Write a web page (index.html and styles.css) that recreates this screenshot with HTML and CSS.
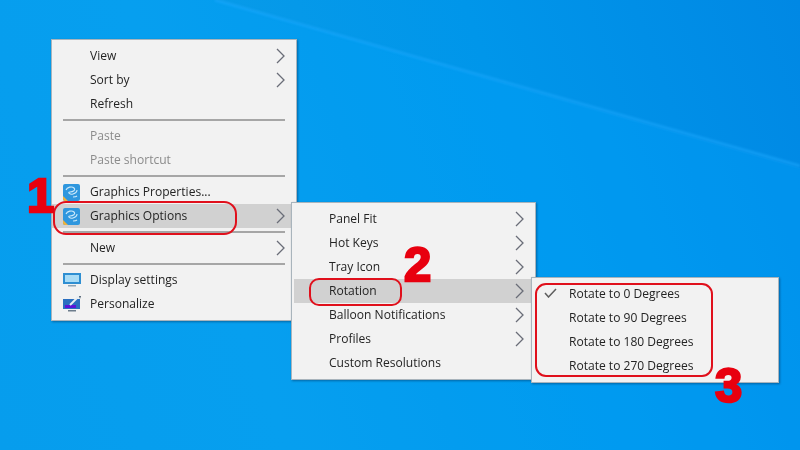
FILE: index.html
```html
<!DOCTYPE html>
<html lang="en">
<head>
  <meta charset="UTF-8" />
  <title>Rotate screen with Graphics Options</title>
  <link rel="stylesheet" href="styles.css">
</head>
<body>

<div class="desktop">
  <svg class="beam" width="800" height="450" viewBox="0 0 800 450">
    <polygon class="beam-glow" points="215,0 800,168 800,450 0,450 0,0" />
    <line class="beam-line" x1="215" y1="0" x2="800" y2="166" />
  </svg>

  <!-- desktop context menu -->
  <div class="menu menu-main">
    <div class="item"><span class="slot"></span><span class="label">View</span><svg class="chev" width="9" height="16" viewBox="0 0 9 16"><path d="M1 1l7 7-7 7" /></svg></div>
    <div class="item"><span class="slot"></span><span class="label">Sort by</span><svg class="chev" width="9" height="16" viewBox="0 0 9 16"><path d="M1 1l7 7-7 7" /></svg></div>
    <div class="item"><span class="slot"></span><span class="label">Refresh</span></div>
    <div class="sep"></div>
    <div class="item off"><span class="slot"></span><span class="label">Paste</span></div>
    <div class="item off"><span class="slot"></span><span class="label">Paste shortcut</span></div>
    <div class="sep"></div>
    <div class="item">
      <span class="slot">
        <svg class="ico" width="17" height="17" viewBox="0 0 17 17"><rect width="17" height="17" rx="2" fill="#2f97de" /><path d="M0 12l5 5H2a2 2 0 0 1-2-2z" fill="#efb23a" /><path d="M3 6c1-3 6-4 8-2s-1 4-4 4 0 3 3 2 4-2 4-4M10 13c1 0 3 0 4-1" fill="none" stroke="#cdeafa" stroke-width="1.1" /></svg>
      </span>
      <span class="label">Graphics Properties...</span>
    </div>
    <div class="item on">
      <span class="slot">
        <svg class="ico" width="17" height="17" viewBox="0 0 17 17"><rect width="17" height="17" rx="2" fill="#2f97de" /><path d="M0 12l5 5H2a2 2 0 0 1-2-2z" fill="#efb23a" /><path d="M3 6c1-3 6-4 8-2s-1 4-4 4 0 3 3 2 4-2 4-4M10 13c1 0 3 0 4-1" fill="none" stroke="#cdeafa" stroke-width="1.1" /></svg>
      </span>
      <span class="label">Graphics Options</span>
      <svg class="chev" width="9" height="16" viewBox="0 0 9 16"><path d="M1 1l7 7-7 7" /></svg>
    </div>
    <div class="sep"></div>
    <div class="item"><span class="slot"></span><span class="label">New</span><svg class="chev" width="9" height="16" viewBox="0 0 9 16"><path d="M1 1l7 7-7 7" /></svg></div>
    <div class="sep"></div>
    <div class="item">
      <span class="slot">
        <svg class="ico" width="18" height="16" viewBox="0 0 18 16"><rect x="0" y="1" width="18" height="11" fill="#2f8fd2" /><rect x="2" y="3" width="14" height="7" fill="#a9dcf6" /><rect x="5" y="13" width="8" height="1.5" fill="#8fa4b4" /></svg>
      </span>
      <span class="label">Display settings</span>
    </div>
    <div class="item">
      <span class="slot">
        <svg class="ico" width="18" height="16" viewBox="0 0 18 16"><rect x="0" y="3" width="17" height="10" fill="#2a6fc0" /><rect x="2" y="9" width="11" height="3" fill="#5a14d8" /><path d="M7 9l9-9" stroke="#e6eef4" stroke-width="2" /><path d="M16 0l2 0-1 3" fill="#46586a" /><rect x="5" y="14" width="8" height="1.5" fill="#6d7d8c" /></svg>
      </span>
      <span class="label">Personalize</span>
    </div>
  </div>

  <!-- Graphics Options submenu -->
  <div class="menu menu-sub">
    <div class="item"><span class="slot"></span><span class="label">Panel Fit</span><svg class="chev" width="9" height="16" viewBox="0 0 9 16"><path d="M1 1l7 7-7 7" /></svg></div>
    <div class="item"><span class="slot"></span><span class="label">Hot Keys</span><svg class="chev" width="9" height="16" viewBox="0 0 9 16"><path d="M1 1l7 7-7 7" /></svg></div>
    <div class="item"><span class="slot"></span><span class="label">Tray Icon</span><svg class="chev" width="9" height="16" viewBox="0 0 9 16"><path d="M1 1l7 7-7 7" /></svg></div>
    <div class="item on"><span class="slot"></span><span class="label">Rotation</span><svg class="chev" width="9" height="16" viewBox="0 0 9 16"><path d="M1 1l7 7-7 7" /></svg></div>
    <div class="item"><span class="slot"></span><span class="label">Balloon Notifications</span><svg class="chev" width="9" height="16" viewBox="0 0 9 16"><path d="M1 1l7 7-7 7" /></svg></div>
    <div class="item"><span class="slot"></span><span class="label">Profiles</span><svg class="chev" width="9" height="16" viewBox="0 0 9 16"><path d="M1 1l7 7-7 7" /></svg></div>
    <div class="item"><span class="slot"></span><span class="label">Custom Resolutions</span></div>
  </div>

  <!-- Rotation submenu -->
  <div class="menu menu-rot">
    <div class="item">
      <span class="slot"><svg class="check" width="13" height="10" viewBox="0 0 13 10"><path d="M1 5l3.5 4L12 1" /></svg></span>
      <span class="label">Rotate to 0 Degrees</span>
    </div>
    <div class="item"><span class="slot"></span><span class="label">Rotate to 90 Degrees</span></div>
    <div class="item"><span class="slot"></span><span class="label">Rotate to 180 Degrees</span></div>
    <div class="item"><span class="slot"></span><span class="label">Rotate to 270 Degrees</span></div>
  </div>

  <!-- red annotations -->
  <div class="ring ring-1"></div>
  <div class="ring ring-2"></div>
  <div class="ring ring-3"></div>
  <span class="step step-1">1</span>
  <span class="step step-2">2</span>
  <span class="step step-3">3</span>
</div>

</body>
</html>
```

FILE: styles.css
```css
* {
  margin: 0;
  padding: 0;
  box-sizing: border-box;
}

body {
  width: 800px;
  height: 450px;
  overflow: hidden;
  font-family: 'Open Sans', 'Liberation Sans', sans-serif;
}

.desktop {
  position: relative;
  width: 800px;
  height: 450px;
  overflow: hidden;
  background: linear-gradient(250deg, #0088e4 0%, #0096ea 35%, #0a9ce8 70%, #0a9ae6 100%);
}

.beam {
  position: absolute;
  left: 0;
  top: 0;
}

.beam-glow {
  fill: rgba(0, 165, 255, 0.3);
}

.beam-line {
  stroke: rgba(30, 170, 255, 0.55);
  stroke-width: 3;
  filter: blur(1px);
}

.menu {
  position: absolute;
  background: #f2f2f2;
  border: 1px solid #a9b4bc;
  padding: 4px 0;
  box-shadow: 1px 1px 2px rgba(0, 40, 80, 0.45);
  color: #242424;
  font-size: 12.05px;
  filter: blur(0.3px);
}

.menu-main {
  left: 51px;
  top: 39px;
  width: 246px;
}

.menu-sub {
  left: 291px;
  top: 202px;
  width: 245px;
}

.menu-sub .item {
  margin: 0 1px 0 2px;
  padding-right: 10px;
}

.menu-sub .slot {
  width: 35px;
}

.menu-rot {
  left: 531px;
  top: 277px;
  width: 248px;
}

.menu-rot .slot {
  width: 37px;
}

.item {
  display: flex;
  align-items: center;
  height: 24px;
  padding-right: 11px;
}

.item.on {
  background: #d1d1d1;
}

.item.off {
  color: #8b8b8b;
}

.slot {
  flex: none;
  display: flex;
  align-items: center;
  width: 38px;
}

.ico {
  margin-left: 11px;
}

.check {
  margin: -2px 0 0 12px;
  fill: none;
  stroke: #5e5e5e;
  stroke-width: 1.5;
}

.label {
  flex: 1;
  white-space: nowrap;
  margin-top: -2px;
}

.chev {
  flex: none;
  fill: none;
  stroke: #6a6d78;
  stroke-width: 1.3;
}

.sep {
  height: 2px;
  margin: 3px 11px;
  background: #a6a6a6;
}

.ring {
  position: absolute;
  border: 2px solid #e0101c;
}

.ring-1 {
  left: 53px;
  top: 201px;
  width: 184px;
  height: 34px;
  border-radius: 13px;
}

.ring-2 {
  left: 309px;
  top: 278px;
  width: 93px;
  height: 28px;
  border-radius: 10px;
}

.ring-3 {
  left: 535px;
  top: 283px;
  width: 178px;
  height: 94px;
  border-radius: 11px;
}

.step {
  position: absolute;
  color: #e8000f;
  font-family: 'Liberation Sans', sans-serif;
  font-weight: 700;
  font-size: 49px;
  line-height: 50px;
  -webkit-text-stroke: 2.4px #e8000f;
}

.step-1 {
  left: 27px;
  top: 170px;
}

.step-2 {
  left: 404px;
  top: 239px;
}

.step-3 {
  left: 715px;
  top: 360px;
}
```
